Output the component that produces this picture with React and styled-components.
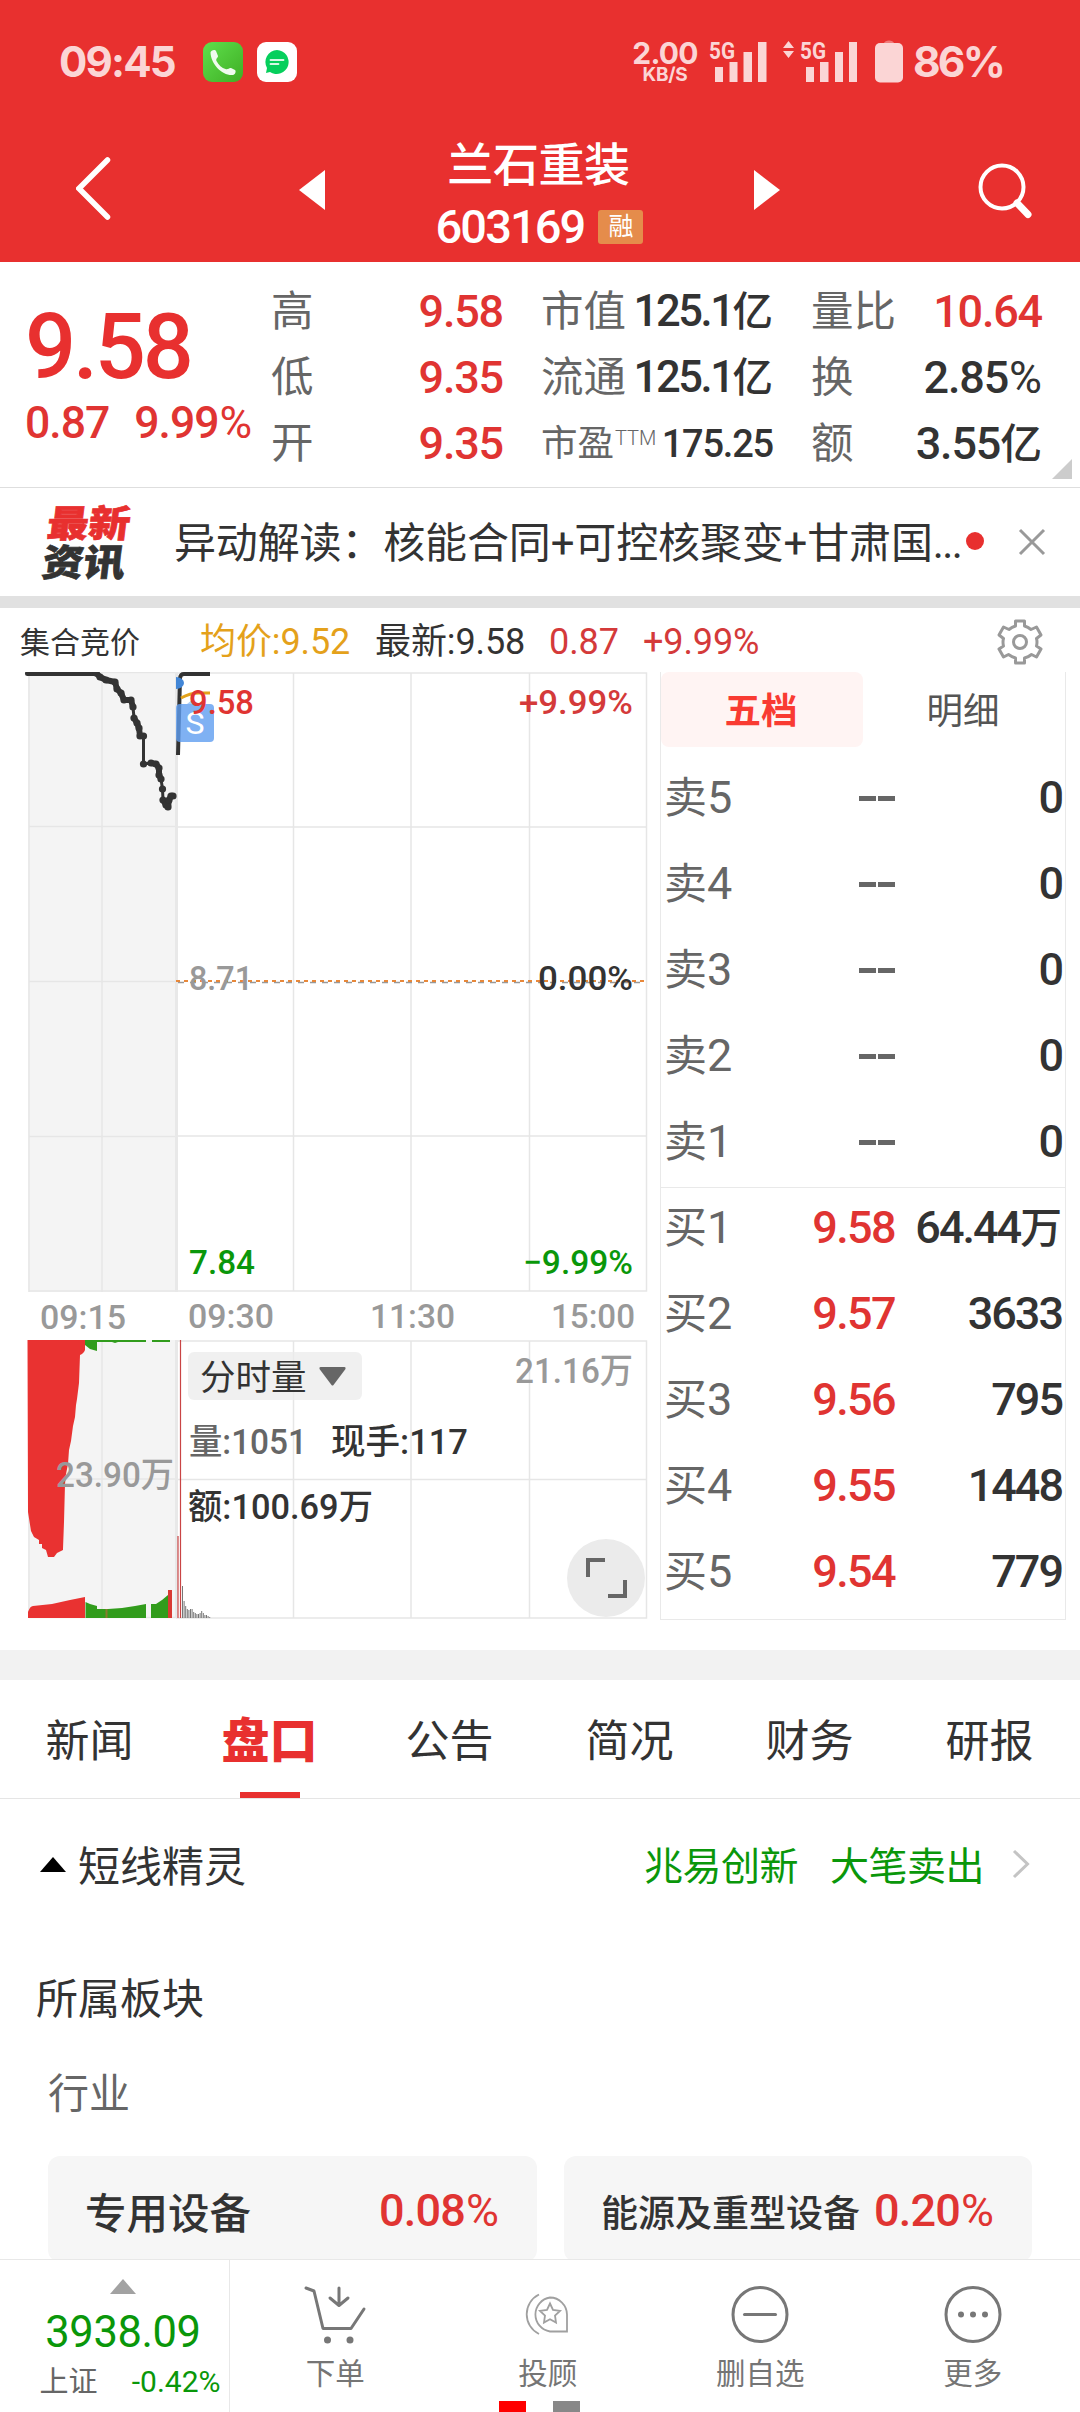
import React from "react";
import styled, {createGlobalStyle, css} from "styled-components";

const red = "#e8302f";
const priceRed = "#e03432";
const green = "#0a970a";
const dark = "#333";
const grey = "#666";
const light = "#999";
const line = "#e9e9e9";

const GlobalStyle = createGlobalStyle`
  * {
    box-sizing: border-box;
  }
  body {
    margin: 0;
    background: #fff;
    font-family: Roboto, "Noto Sans CJK SC", sans-serif;
    color: ${dark};
  }
`;

const Screen = styled.div`
  display: flex;
  flex-direction: column;
  width: 1080px;
  height: 2412px;
  overflow: hidden;
  background: #fff;
`;

/* ---------- header ---------- */

const Header = styled.header`
  height: 262px;
  flex: none;
  background: ${red};
  color: #fff;
`;

const StatusBar = styled.div`
  display: flex;
  align-items: flex-start;
  height: 124px;
  padding: 40px 76px 0 59px;
  color: #fbd5d5;
`;

const Clock = styled.div`
  width: 144px;
  margin-top: 1px;
  font-family: Inter, sans-serif;
  font-weight: 700;
  font-size: 42px;
  line-height: 42px;
  letter-spacing: -1.8px;
`;

const AppIcon = styled.svg`
  width: 40px;
  height: 40px;
  margin-top: 2px;
  margin-right: 14px;
`;

const NetSpeed = styled.div`
  width: 66px;
  margin-left: auto;
  text-align: center;
  font-family: Inter, sans-serif;
  font-weight: 700;
  font-size: 30px;
  line-height: 26px;
  letter-spacing: -0.8px;
`;

const NetUnit = styled.div`
  font-size: 19px;
  font-weight: 700;
  line-height: 16px;
  margin-top: 1px;
  letter-spacing: -0.3px;
`;

const Signals = styled.svg`
  width: 200px;
  height: 44px;
  margin-left: 9px;
  overflow: visible;
  font-family: Roboto, sans-serif;
`;

const Battery = styled.div`
  width: 91px;
  font-family: Inter, sans-serif;
  font-weight: 700;
  font-size: 42.5px;
  line-height: 42px;
  margin: 1px 0 0 6px;
  letter-spacing: -2.8px;
`;

const TitleBar = styled.div`
  display: flex;
  justify-content: space-between;
  height: 138px;
  padding: 0 48px 0 76px;
`;

const NavIcon = styled.svg`
  width: ${props => props.$w}px;
  height: ${props => props.$h}px;
  margin-top: ${props => props.$top}px;
`;

const TitleGroup = styled.div`
  display: flex;
  width: 481px;
  margin-right: 11px;
  justify-content: space-between;
`;

const TitleText = styled.div`
  display: flex;
  flex-direction: column;
  align-items: center;
`;

const StockName = styled.div`
  height: 60px;
  margin-top: 11px;
  padding-right: 2px;
  font-size: 46px;
  line-height: 61px;
  letter-spacing: -0.4px;
  font-weight: 500;
`;

const StockCode = styled.div`
  display: flex;
  align-items: center;
  gap: 14px;
  height: 50px;
  margin-top: 7px;
  font-size: 47px;
  line-height: 50px;
  font-weight: 500;
  letter-spacing: -1.9px;
`;

const MarginBadge = styled.span`
  width: 45px;
  height: 34px;
  border-radius: 3px;
  background: #e58c4b;
  text-align: center;
  font-size: 25px;
  line-height: 33px;
  letter-spacing: 0;
  font-weight: 400;
`;

/* ---------- quote ---------- */

const Quote = styled.section`
  display: flex;
  flex: none;
  height: 226px;
  border-bottom: 1px solid #dedede;
`;

const PriceBlock = styled.div`
  width: 271px;
  padding-left: 25px;
  color: ${priceRed};
`;

const LastPrice = styled.div`
  margin-top: 41px;
  height: 90px;
  font-size: 90px;
  line-height: 90px;
  font-weight: 500;
  letter-spacing: -3.2px;
  color: ${red};
`;

const Change = styled.div`
  display: flex;
  gap: 25px;
  margin-top: 5px;
  font-size: 44.5px;
  line-height: 50px;
  font-weight: 500;
  letter-spacing: -1px;
`;

const StatColumn = styled.div`
  width: ${props => props.$width}px;
  margin-right: ${props => props.$gap}px;
  padding-top: 17px;
`;

const Stat = styled.div`
  display: flex;
  justify-content: space-between;
  align-items: center;
  height: 66px;
  white-space: nowrap;
  font-size: ${props => props.$small ? 38 : 45}px;
  line-height: 66px;
`;

const StatLabel = styled.span`
  color: ${grey};
  font-weight: 400;
  font-size: ${props => props.$small ? 36.5 : 42.5}px;
`;

const Ttm = styled.span`
  margin-left: 1px;
  font-size: 20px;
  font-weight: 300;
  vertical-align: 11px;
  line-height: 1;
`;

const StatValue = styled.span`
  color: ${props => props.$up ? priceRed : dark};
  font-weight: 500;
  letter-spacing: -1.2px;
  ${props => props.$tight && css`
    font-size: 43.5px;
    letter-spacing: -2.4px;
  `}
`;

const Unit = styled.span`
  font-size: 0.93em;
  letter-spacing: 0;
`;

const Percent = styled.span`
  margin-left: 1px;
  font-weight: 400;
  letter-spacing: 0;
`;

const Corner = styled.svg`
  align-self: flex-end;
  width: 20px;
  height: 20px;
  margin: 0 0 8px -20px;
`;

/* ---------- news strip ---------- */

const NewsStrip = styled.section`
  display: flex;
  align-items: center;
  flex: none;
  height: 120px;
  border-bottom: 12px solid #e1e1e1;
  padding-left: 42px;
`;

const NewsLogo = styled.div`
  width: 132px;
  padding: 3px 0 0 3px;
  font-weight: 900;
  font-size: 41.5px;
  line-height: 44px;
  transform: skewX(-7deg) scaleY(0.9);
  -webkit-text-stroke: 0.8px currentColor;
`;

const NewsLogoTop = styled.div`
  color: ${red};
`;

const NewsTitle = styled.div`
  width: 790px;
  padding-top: 3px;
  font-size: 42px;
  line-height: 60px;
  font-weight: 400;
  letter-spacing: -0.15px;
  white-space: nowrap;
`;

const Ellipsis = styled.span`
  letter-spacing: -1.6px;
`;

const UnreadDot = styled.span`
  width: 18px;
  height: 18px;
  margin: -3px 0 0 2px;
  border-radius: 50%;
  background: ${red};
`;

const CloseIcon = styled.svg`
  width: 28px;
  height: 28px;
  margin-left: 34px;
`;

/* ---------- chart ---------- */

const InfoRow = styled.div`
  display: flex;
  align-items: center;
  flex: none;
  height: 64px;
  padding: 4px 38px 0 20px;
  font-size: 36px;
  line-height: 50px;
  white-space: nowrap;
`;

const Auction = styled.span`
  width: 180px;
  padding-top: 2px;
  font-size: 30px;
`;

const InfoItem = styled.span`
  width: ${props => props.$width}px;
  color: ${props => props.$color};
  letter-spacing: -0.1px;
`;

const Gear = styled.svg`
  width: 46px;
  height: 46px;
  margin: 0 -1px 0 auto;
`;

const Market = styled.section`
  display: flex;
  flex: none;
  height: 978px;
`;

const ChartArea = styled.div`
  position: relative;
  width: 660px;
  height: 948px;
`;

const ChartSvg = styled.svg`
  display: block;
  width: 660px;
  height: 948px;
  font-weight: 500;
`;

const VolumePicker = styled.div`
  position: absolute;
  left: 188px;
  top: 680px;
  display: flex;
  align-items: center;
  gap: 12px;
  width: 174px;
  height: 48px;
  padding-left: 12px;
  border-radius: 6px;
  background: rgba(235, 235, 235, 0.75);
  font-size: 35.5px;
`;

const PickerText = styled.span`
  padding-top: 4px;
  line-height: 48px;
`;

const ExpandButton = styled.div`
  position: absolute;
  left: 567px;
  top: 867px;
  width: 78px;
  height: 78px;
  border-radius: 50%;
  background: #ebebeb;
`;

const OrderBook = styled.div`
  width: 406px;
  height: 948px;
  border: 1px solid ${line};
  border-top: none;
`;

const BookTabs = styled.div`
  display: flex;
  height: 83px;
`;

const BookTab = styled.div`
  width: 202px;
  height: 75px;
  padding-right: 2px;
  border-radius: 8px;
  text-align: center;
  line-height: 80px;
  font-size: 36.5px;
  color: #555;
  ${props => props.$active && css`
    background: #fff4f3;
    color: #f93b32;
    font-weight: 700;
  `}
`;

const BookRow = styled.div`
  display: flex;
  align-items: center;
  height: 86px;
  padding: 0 3px;
  font-size: 45px;
  line-height: 86px;
  font-weight: 500;
  white-space: nowrap;
  ${props => props.$divided && css`
    background: linear-gradient(${line}, ${line}) 0 2px / 100% 1px no-repeat;
  `}
`;

const BookSide = styled.span`
  width: 121px;
  color: ${grey};
  font-size: 43px;
  font-weight: 400;
`;

const BookDigit = styled.span`
  font-weight: 400;
  font-size: 45px;
`;

const BookPrice = styled.span`
  width: 110px;
  text-align: right;
  letter-spacing: -1.6px;
  color: ${props => props.$empty ? grey : priceRed};
`;

const Dashes = styled.span`
  display: inline-block;
  width: 36px;
  height: 5px;
  vertical-align: 12px;
  background: linear-gradient(90deg, ${grey} 17px, transparent 17px, transparent 19px, ${grey} 19px);
`;

const BookVolume = styled.span`
  flex: 1;
  text-align: right;
  letter-spacing: -2px;
`;

/* ---------- tabs ---------- */

const Tabs = styled.nav`
  display: flex;
  flex: none;
  height: 149px;
  border-top: 30px solid #f2f2f2;
  border-bottom: 1px solid #e5e5e5;
`;

const Tab = styled.div`
  display: flex;
  flex-direction: column;
  align-items: center;
  width: 180px;
  padding-right: 1px;
  font-size: 44px;
  line-height: 124px;
  ${props => props.$active && css`
    color: ${red};
    font-size: 48px;
    font-weight: 900;
    &::after {
      content: "";
      width: 60px;
      height: 6px;
      margin-top: -12px;
      background: ${red};
    }
  `}
`;

/* ---------- sections ---------- */

const Content = styled.main`
  flex: 1;
  overflow: hidden;
`;

const AlertRow = styled.div`
  display: flex;
  align-items: center;
  height: 130px;
  padding: 0 50px 0 40px;
  font-size: 42px;
`;

const AlertTitle = styled.span`
  margin: -2px auto 0 12px;
`;

const AlertItem = styled.span`
  margin: -2px ${props => props.$right}px 0 0;
  font-size: 39px;
  letter-spacing: -0.5px;
  color: ${green};
`;

const SectionTitle = styled.div`
  height: 60px;
  margin: 41px 0 0 36px;
  font-size: 42px;
  line-height: 60px;
`;

const SectionSub = styled.div`
  height: 60px;
  margin: 34px 0 0 48px;
  font-size: 41px;
  line-height: 60px;
  color: ${grey};
`;

const Cards = styled.div`
  display: flex;
  gap: 27px;
  margin: 32px 48px 0;
`;

const Card = styled.div`
  display: flex;
  align-items: center;
  justify-content: space-between;
  width: ${props => props.$width}px;
  height: 106px;
  padding: 3px 38px 0 37px;
  border-radius: 12px;
  background: #f6f6f6;
  font-size: ${props => props.$font}px;
  font-weight: 500;
  white-space: nowrap;
`;

const CardValue = styled.span`
  font-size: 45px;
  font-weight: 500;
  letter-spacing: -0.8px;
  color: ${priceRed};
`;

/* ---------- bottom bar ---------- */

const BottomBar = styled.footer`
  position: relative;
  display: flex;
  flex: none;
  height: 153px;
  border-top: 1px solid #e8e8e8;
`;

const IndexCell = styled.div`
  display: flex;
  flex-direction: column;
  align-items: center;
  width: 230px;
  padding: 19px 0 0 16px;
  border-right: 1px solid #e8e8e8;
  color: ${green};
`;

const IndexArrow = styled.svg`
  width: 26px;
  height: 15px;
`;

const IndexValue = styled.div`
  margin: 16px 0 0 1px;
  font-size: 43.5px;
  line-height: 46px;
  letter-spacing: -0.4px;
`;

const IndexChange = styled.div`
  display: flex;
  justify-content: space-between;
  width: 181px;
  margin: 6px 0 0 15px;
  font-size: 30px;
  line-height: 40px;
`;

const IndexName = styled.span`
  color: ${grey};
  font-size: 29px;
`;

const Action = styled.div`
  display: flex;
  flex-direction: column;
  align-items: center;
  width: 212.5px;
  padding: 24px 2px 0 0;
  font-size: 29.5px;
  line-height: 40px;
  color: #757575;
`;

const ActionIcon = styled.svg`
  width: 64px;
  height: 62px;
  margin-bottom: 8px;
  fill: none;
  stroke: ${props => props.$pale ? "#a0a0a0" : "#777"};
  stroke-width: ${props => props.$pale ? 1.8 : 3};
`;

const PageMarks = styled.div`
  position: absolute;
  left: 499px;
  bottom: 0;
  display: flex;
  gap: 27px;
`;

const PageMark = styled.i`
  width: 27px;
  height: 11px;
  background: ${props => props.$color};
`;

const stats = [
  {width: 232, gap: 38, rows: [["高", "9.58", true], ["低", "9.35", true], ["开", "9.35", true]]},
  {width: 232, gap: 38, rows: [["市值", "125.1亿"], ["流通", "125.1亿"], ["市盈", "175.25"]]},
  {width: 231, gap: 30, rows: [["量比", "10.64", true], ["换", "2.85%"], ["额", "3.55亿"]]},
];

const asks = [5, 4, 3, 2, 1];
const bids = [
  ["9.58", "64.44万"],
  ["9.57", "3633"],
  ["9.56", "795"],
  ["9.55", "1448"],
  ["9.54", "779"],
];

const tabs = ["新闻", "盘口", "公告", "简况", "财务", "研报"];

// auction trace, one point per matched quote
const auction = [
  [28, 1], [96, 1], [100, 5], [106, 8], [115, 10], [117, 17], [121, 21], [124, 28], [131, 28],
  [133, 35], [134, 46], [137, 51], [139, 56], [140, 64], [143.5, 64], [143.5, 92], [151, 91],
  [156, 92], [159, 96], [159, 103], [161, 107], [162.5, 117], [163, 128], [166, 133], [168, 135],
  [169, 128], [171, 124], [173, 124],
];

// stretches of the trace where the quotes lie close together
const dense = [[1, 9], [10, 13], [16, 20], [22, 27]];

// minute volume after the open
const minutes = [32, 17, 12, 9, 8, 9, 9, 6, 5, 4, 4, 5, 7, 5, 3, 3, 2, 1];

const format = (value) => {
  if (value.endsWith("%")) return <>{value.slice(0, -1)}<Percent>%</Percent></>;
  if (/[亿万]$/.test(value)) return <>{value.slice(0, -1)}<Unit>{value.slice(-1)}</Unit></>;
  return value;
};

const toPoints = (list) => list.map(p => p.join(",")).join(" ");

const Label = ({x, y, w, color = light, end, size = 34, children}) => (
  <text x={x} y={y} fill={color} fontSize={size}
        textLength={w} lengthAdjust="spacingAndGlyphs" textAnchor={end ? "end" : "start"}>
    {children}
  </text>
);

// y = 0 is the upper edge of the price pane
const Chart = () => (
  <ChartSvg viewBox="0 0 660 948">
    <rect x="28" y="0" width="148" height="620" fill="#f4f4f4"/>
    <rect x="28" y="668" width="148" height="278" fill="#f4f4f4"/>
    <g stroke="#e6e6e6" strokeWidth="1.5" fill="none">
      <path d="M29 0V620M102 0V620M29 .5H176M29 154.5H176M29 309.5H176M29 464.5H176M29 619H176"/>
      <path d="M29 668V946M102 668V946M29 807H176M29 945.500H176"/>
      <path d="M176 1H646.500V619H176M176 155H646M176 464H646M293.500 1V619M411 1V619M529.500 1V619"/>
      <path d="M176 669H646.500V946H176M176 807.500H646M293.500 669V946M411 669V946M529.500 669V946"/>
    </g>
    <path d="M176.500 0V620M176.500 668V946" stroke="#e8e8e8" strokeWidth="3"/>

    <path d="M178 310.500H646" stroke="#999" strokeWidth="1.500" strokeDasharray="6 6"/>
    <path d="M176 309H646" stroke="#e8883a" strokeWidth="2" strokeDasharray="4 4"/>

    <g fill="none" stroke={dark} strokeLinejoin="round" strokeLinecap="round">
      <polyline points={toPoints(auction)} strokeWidth="3"/>
      {dense.map(([from, to]) => (
        <polyline key={from} points={toPoints(auction.slice(from, to + 1))} strokeWidth="6"/>
      ))}
      <path d="M27.500 1.500H96" strokeWidth="5"/>
    </g>
    {auction.slice(1).map(([x, y]) => <circle key={`${x}-${y}`} cx={x} cy={y} r="3.6" fill={dark}/>)}

    <path d="M178 83L180 6Q180.500 2 184 2H210" fill="none" stroke={dark} strokeWidth="4"/>
    <path d="M181 26Q190 21 199 21H210" fill="none" stroke="#e3a21a" strokeWidth="3"/>
    <path d="M176 5a8 6 0 0 1 0 12z" fill="#4286d6"/>
    <path d="M187 32L192 28L198 32z" fill="#a9cbf7"/>
    <rect x="176" y="32" width="38" height="38" rx="4" fill="#5f9df0" fillOpacity=".8"/>
    <text x="195" y="62" fill="#fff" fontSize="32" fontWeight="400" textAnchor="middle">S</text>

    <Label x={189} y={42} w={65} color={priceRed}>9.58</Label>
    <Label x={633} y={42} w={114} color="#d43a3a" end>+9.99%</Label>
    <Label x={189} y={318} w={64}>8.71</Label>
    <Label x={633} y={318} w={95} color={dark} end>0.00%</Label>
    <Label x={189} y={602} w={66} color={green}>7.84</Label>
    <Label x={633} y={602} w={110} color={green} end>−9.99%</Label>

    <Label x={40} y={657} w={86}>09:15</Label>
    <Label x={188} y={656} w={86}>09:30</Label>
    <Label x={455} y={656} w={85} end>11:30</Label>
    <Label x={635} y={656} w={84} end>15:00</Label>

    <path
      d="M27.500 668H85V678L84 680L82 682L80 683L79 711L77 727L76 733L75 745L73 754L71 769L69 778L68 792L66 802L65 812L64 850L63 877V878L57 881L54 885H48L46 878L42 876V872H39V868L34 865L31 859L28 840Z"
      fill="#e93231"/>
    <path d="M85 668H146V670H118L115 671L112 670H97V679L90 677L85 673zM152 668H170V670H152z" fill="#319c1c"/>
    <path d="M28 946V940Q30 934 33 934L52 932L70 928L85 925V946z" fill="#e93231"/>
    <path d="M85.500 946V930L90 932L97 934V937H108L122 936L135 934L146 932V946zM151 946V932H156L162 928L168 923V946z" fill="#319c1c"/>
    <path d="M168 918H172V946H168z" fill="#d93a34"/>
    <path d="M106.500 937V946" stroke="#8a7a2c" strokeWidth="2"/>
    <path d="M180.500 668V946M178 864V946" stroke="#c94444" strokeWidth="1.200"/>
    {minutes.map((h, i) => (
      <rect key={i} x={182 + i * 1.6} y={946 - h} width="1" height={h} fill="#777"/>
    ))}

    <Label x={56} y={815} w={118} size={35}>23.90万</Label>
    <Label x={633} y={711} w={118} end size={35}>21.16万</Label>
    <Label x={189} y={782} w={118} color={grey} size={35}>量:1051</Label>
    <Label x={331} y={782} w={137} color={dark} size={35}>现手:117</Label>
    <Label x={188} y={847} w={185} color={dark} size={35}>额:100.69万</Label>
  </ChartSvg>
);

const StatusIcons = () => (
  <>
    <AppIcon viewBox="0 0 40 40">
      <defs>
        <linearGradient id="call" x1="0" y1="0" x2="1" y2="1">
          <stop offset="0" stopColor="#5fe04c"/>
          <stop offset="1" stopColor="#3fae24"/>
        </linearGradient>
      </defs>
      <rect width="40" height="40" rx="9" fill="url(#call)"/>
      <path d="M7.500 10.500C8 8 12 7 13 9L15 14C15 16 12.500 16.500 13.500 19C15.500 23 19 26 22.500 27C25 28 26 25.500 28 26L32 28C33.500 29 32 33 30 33C19 34 8 22 7.500 10.500z" fill="#f0fbee"/>
    </AppIcon>
    <AppIcon viewBox="0 0 40 40">
      <rect width="40" height="40" rx="9" fill="#fff"/>
      <path d="M20 8A12 12 0 1 1 13 30L9 31L10 26A12 12 0 0 1 20 8z" fill="#06cf5c"/>
      <path d="M13.500 18H26.500M13.500 22H21.500" stroke="#d5f8e4" strokeWidth="1.800" strokeLinecap="round"/>
    </AppIcon>
  </>
);

const SignalIcons = () => (
  <Signals viewBox="709 40 200 44" fill="#fbd5d5">
    <text x="711" y="58.500" fontSize="24" fontWeight="700" textLength="26" lengthAdjust="spacingAndGlyphs">5G</text>
    <path d="M717 67h8v15h-8zM731.500 62h8v20h-8zM745.500 52h8.500v30h-8.500zM760 42h8.500v40h-8.500z"/>
    <path d="M785 48L790.500 41L796 48zM785 51L790.500 58L796 51z"/>
    <text x="802" y="58.500" fontSize="24" fontWeight="700" textLength="26" lengthAdjust="spacingAndGlyphs">5G</text>
    <path d="M808 67h8v15h-8zM822 62h8.500v20h-8.500zM837 52h8v30h-8zM851 42h8v40h-8z"/>
    <path d="M886 43Q887 40.500 891 40.500T896 43z" opacity=".45"/>
    <rect x="877" y="43" width="28" height="39.500" rx="5"/>
  </Signals>
);

const App = () => (
  <Screen>
    <GlobalStyle/>
    <Header>
      <StatusBar>
        <Clock>09:45</Clock>
        <StatusIcons/>
        <NetSpeed>2.00<NetUnit>KB/S</NetUnit></NetSpeed>
        <SignalIcons/>
        <Battery>86%</Battery>
      </StatusBar>
      <TitleBar>
        <NavIcon $w={36} $h={66} $top={31} viewBox="0 0 36 66" fill="none" stroke="#fff" strokeWidth="5.500" strokeLinecap="round">
          <path d="M31.500 5L3 33.500L31.500 62"/>
        </NavIcon>
        <TitleGroup>
          <NavIcon $w={26} $h={40} $top={46} viewBox="0 0 26 40" fill="#fff"><path d="M26 0V40L0 20z"/></NavIcon>
          <TitleText>
            <StockName>兰石重装</StockName>
            <StockCode>603169<MarginBadge>融</MarginBadge></StockCode>
          </TitleText>
          <NavIcon $w={26} $h={40} $top={46} viewBox="0 0 26 40" fill="#fff"><path d="M0 0V40L26 20z"/></NavIcon>
        </TitleGroup>
        <NavIcon $w={54} $h={56} $top={39} viewBox="978 163 54 56" fill="none" stroke="#fff">
          <circle cx="1002" cy="187" r="21.500" strokeWidth="4"/>
          <path d="M1017 203L1028 214.500" strokeWidth="7" strokeLinecap="round"/>
        </NavIcon>
      </TitleBar>
    </Header>

    <Quote>
      <PriceBlock>
        <LastPrice>9.58</LastPrice>
        <Change><span>0.87</span><span>{format("9.99%")}</span></Change>
      </PriceBlock>
      {stats.map(column => (
        <StatColumn key={column.rows[0][0]} $width={column.width} $gap={column.gap}>
          {column.rows.map(([label, value, up]) => (
            <Stat key={label} $small={label === "市盈"}>
              <StatLabel $small={label === "市盈"}>{label}{label === "市盈" && <Ttm>TTM</Ttm>}</StatLabel>
              <StatValue $up={up} $tight={value === "125.1亿"}>{format(value)}</StatValue>
            </Stat>
          ))}
        </StatColumn>
      ))}
      <Corner viewBox="0 0 20 20" fill="#ccc"><path d="M20 0V20H0z"/></Corner>
    </Quote>

    <NewsStrip>
      <NewsLogo>
        <NewsLogoTop>最新</NewsLogoTop>
        <div>资讯</div>
      </NewsLogo>
      <NewsTitle>异动解读：核能合同+可控核聚变+甘肃国<Ellipsis>...</Ellipsis></NewsTitle>
      <UnreadDot/>
      <CloseIcon viewBox="0 0 28 28" stroke="#999" strokeWidth="3"><path d="M2 2L26 26M26 2L2 26"/></CloseIcon>
    </NewsStrip>

    <InfoRow>
      <Auction>集合竞价</Auction>
      <InfoItem $width={175} $color="#e4a11b">均价:9.52</InfoItem>
      <InfoItem $width={174} $color={dark}>最新:9.58</InfoItem>
      <InfoItem $width={94} $color="#d43a3a">0.87</InfoItem>
      <InfoItem $width={130} $color="#d43a3a">+9.99%</InfoItem>
      <Gear viewBox="0 0 46 46" fill="none" stroke="#999" strokeWidth="3">
        <path d="M18.500 2H27.500V7Q31 8 34 10.500L39.500 8L44 16L39.500 19.500Q40.500 23 39.500 27L44 30L39.500 38L34.500 35.500Q31.500 38 27.500 39V44H18.500V39Q15 38 11.500 35.500L6.500 38L2 30L6.500 27Q5.500 23 6.500 19.500L2 16L6.500 8L12 10.500Q15 8 18.500 7z" strokeLinejoin="round"/>
        <circle cx="23" cy="23" r="6.500"/>
      </Gear>
    </InfoRow>

    <Market>
      <ChartArea>
        <Chart/>
        <VolumePicker>
          <PickerText>分时量</PickerText>
          <svg width="27" height="19" viewBox="0 0 27 19" fill="#666"><path d="M1.500 0H25.500Q27 0 26.500 2L14.500 18Q13.500 19 12.500 18L.5 2Q0 0 1.500 0z"/></svg>
        </VolumePicker>
        <ExpandButton>
          <svg width="78" height="78" viewBox="0 0 78 78" fill="none" stroke="#666" strokeWidth="4">
            <path d="M21 38V21H38M58 41V57H41"/>
          </svg>
        </ExpandButton>
      </ChartArea>
      <OrderBook>
        <BookTabs>
          <BookTab $active>五档</BookTab>
          <BookTab>明细</BookTab>
        </BookTabs>
        {asks.map(level => (
          <BookRow key={level}>
            <BookSide>卖<BookDigit>{level}</BookDigit></BookSide>
            <BookPrice $empty><Dashes aria-label="--"/></BookPrice>
            <BookVolume>0</BookVolume>
          </BookRow>
        ))}
        {bids.map(([price, volume], i) => (
          <BookRow key={price} $divided={i === 0}>
            <BookSide>买<BookDigit>{i + 1}</BookDigit></BookSide>
            <BookPrice>{price}</BookPrice>
            <BookVolume>{format(volume)}</BookVolume>
          </BookRow>
        ))}
      </OrderBook>
    </Market>

    <Tabs>
      {tabs.map(name => <Tab key={name} $active={name === "盘口"}>{name}</Tab>)}
    </Tabs>

    <Content>
      <AlertRow>
        <svg width="26" height="15" viewBox="0 0 26 15"><path d="M13 0L26 15H0z"/></svg>
        <AlertTitle>短线精灵</AlertTitle>
        <AlertItem $right={32}>兆易创新</AlertItem>
        <AlertItem $right={28}>大笔卖出</AlertItem>
        <svg width="18" height="30" viewBox="0 0 18 30" fill="none" stroke="#c4c4c4" strokeWidth="3"><path d="M2 2L15.500 15L2 28"/></svg>
      </AlertRow>
      <SectionTitle>所属板块</SectionTitle>
      <SectionSub>行业</SectionSub>
      <Cards>
        <Card $width={489} $font={41.5}>专用设备<CardValue>{format("0.08%")}</CardValue></Card>
        <Card $width={468} $font={37}>能源及重型设备<CardValue>{format("0.20%")}</CardValue></Card>
      </Cards>
    </Content>

    <BottomBar>
      <IndexCell>
        <IndexArrow viewBox="0 0 26 15" fill="#a2a2a2"><path d="M13 0L26 15H0z"/></IndexArrow>
        <IndexValue>3938.09</IndexValue>
        <IndexChange><IndexName>上证</IndexName>-0.42%</IndexChange>
      </IndexCell>
      <Action>
        <ActionIcon viewBox="304 2284 64 62" strokeLinecap="round" strokeLinejoin="round">
          <path d="M307 2288L315 2291L324 2328.500H352L365 2309"/>
          <path d="M340 2288V2305M331 2298L340 2305.500L349 2298"/>
          <circle cx="328.500" cy="2340" r="3.500" fill="#777" stroke="none"/>
          <circle cx="351" cy="2340" r="3.500" fill="#777" stroke="none"/>
        </ActionIcon>
        下单
      </Action>
      <Action>
        <ActionIcon $pale viewBox="517 2284 64 62">
          <path d="M551 2297.500A17.200 17.200 0 0 0 551 2331.500H568V2314.500A17.200 17.200 0 0 0 551 2297.500z"/>
          <path d="M540 2294.500A22 22 0 0 0 540 2334"/>
          <path d="M551 2303.500L554 2310L561 2310.800L556 2315.500L557 2322.500L551 2319.200L545 2322.500L546 2315.500L541 2310.800L548 2310z"/>
        </ActionIcon>
        投顾
      </Action>
      <Action>
        <ActionIcon viewBox="0 0 64 62">
          <circle cx="32" cy="30.500" r="27"/>
          <path d="M16.500 30.500H47.500" strokeLinecap="round"/>
        </ActionIcon>
        删自选
      </Action>
      <Action>
        <ActionIcon viewBox="0 0 64 62">
          <circle cx="32" cy="30.500" r="27"/>
          <g fill="#777" stroke="none">
            <circle cx="20" cy="30.500" r="3"/>
            <circle cx="32" cy="30.500" r="3"/>
            <circle cx="44" cy="30.500" r="3"/>
          </g>
        </ActionIcon>
        更多
      </Action>
      <PageMarks>
        <PageMark $color="#f00"/>
        <PageMark $color="#888"/>
      </PageMarks>
    </BottomBar>
  </Screen>
);

export default App;
